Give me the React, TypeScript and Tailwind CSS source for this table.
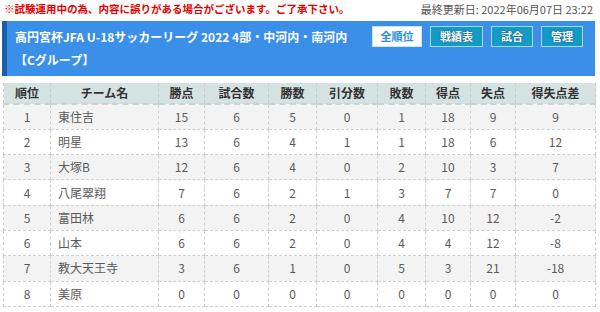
const cols = [
  { label: '順位', w: 'w-[47px]' },
  { label: 'チーム名', w: 'w-[108px]' },
  { label: '勝点', w: 'w-[46px]' },
  { label: '試合数', w: 'w-[64px]' },
  { label: '勝数', w: 'w-[48px]' },
  { label: '引分数', w: 'w-[61px]' },
  { label: '敗数', w: 'w-[48px]' },
  { label: '得点', w: 'w-[45px]' },
  { label: '失点', w: 'w-[45px]' },
  { label: '得失点差', w: 'w-[80px]' },
];

const rows = [
  [1, '東住吉', 15, 6, 5, 0, 1, 18, 9, 9],
  [2, '明星', 13, 6, 4, 1, 1, 18, 6, 12],
  [3, '大塚B', 12, 6, 4, 0, 2, 10, 3, 7],
  [4, '八尾翠翔', 7, 6, 2, 1, 3, 7, 7, 0],
  [5, '富田林', 6, 6, 2, 0, 4, 10, 12, -2],
  [6, '山本', 6, 6, 2, 0, 4, 4, 12, -8],
  [7, '教大天王寺', 3, 6, 1, 0, 5, 3, 21, -18],
  [8, '美原', 0, 0, 0, 0, 0, 0, 0, 0],
];

const menu = ['全順位', '戦績表', '試合', '管理'];

export default function App() {
  return (
    <div className="w-[600px] h-[312px] overflow-hidden bg-white font-['Noto_Sans_CJK_JP','Noto_Sans',sans-serif]">
      <div className="flex items-center justify-between h-[19px] pl-[4px] pr-[7px]">
        <span className="text-[10.5px] font-bold text-[#e60000] leading-none">
          ※試験運用中の為、内容に誤りがある場合がございます。ご了承下さい。
        </span>
        <span className="text-[11px] text-[#555] leading-none">最終更新日: 2022年06月07日 23:22</span>
      </div>
      <div className="mt-[2px] ml-[2px] w-[593px] h-[55px] bg-[#3a8fe8] border-l-[5px] border-[#1b5ea6] flex justify-between pl-[8px] pr-[12px]">
        <div className="text-white font-bold text-[12px] leading-none pt-[10px]">
          <div>高円宮杯JFA U-18サッカーリーグ 2022 4部・中河内・南河内</div>
          <div className="mt-[11px]">【Cグループ】</div>
        </div>
        <div className="flex gap-[8px] pt-[5px] items-start">
          {menu.map((m, i) => (
            <div
              key={m}
              className={
                i === 0
                  ? 'h-[21px] w-[50px] flex items-center justify-center bg-white border border-[#cfe3f5] text-[#2b8fd3] text-[11px] font-bold'
                  : 'h-[21px] px-[9px] flex items-center justify-center bg-[#1599c6] border border-[#a9d8ee] text-white text-[11px] font-bold [text-shadow:0_0_2px_rgba(0,0,0,0.5)]'
              }
            >
              {m}
            </div>
          ))}
        </div>
      </div>
      <table className="mt-[7px] ml-[3px] border-collapse table-fixed w-[592px] text-[12px]">
        <thead>
          <tr className="h-[21px] bg-[#d5e2e2]">
            {cols.map((c) => (
              <th
                key={c.label}
                className={`${c.w} font-bold text-[#333] border-x border-dashed border-[#c8c8c8] border-b-2 border-b-solid border-b-[#c9d3d3] p-0 leading-none`}
              >
                {c.label}
              </th>
            ))}
          </tr>
        </thead>
        <tbody>
          {rows.map((r, i) => (
            <tr key={i} className={`h-[25.3px] ${i % 2 === 0 ? 'bg-[#f3f3f3]' : 'bg-white'}`}>
              {r.map((v, j) => (
                <td
                  key={j}
                  className={`border border-dashed border-[#cfcfcf] text-[#5a5a5a] p-0 leading-none ${
                    j === 1 ? 'text-left pl-[7px]' : 'text-center'
                  }`}
                >
                  {v}
                </td>
              ))}
            </tr>
          ))}
        </tbody>
      </table>
    </div>
  );
}
